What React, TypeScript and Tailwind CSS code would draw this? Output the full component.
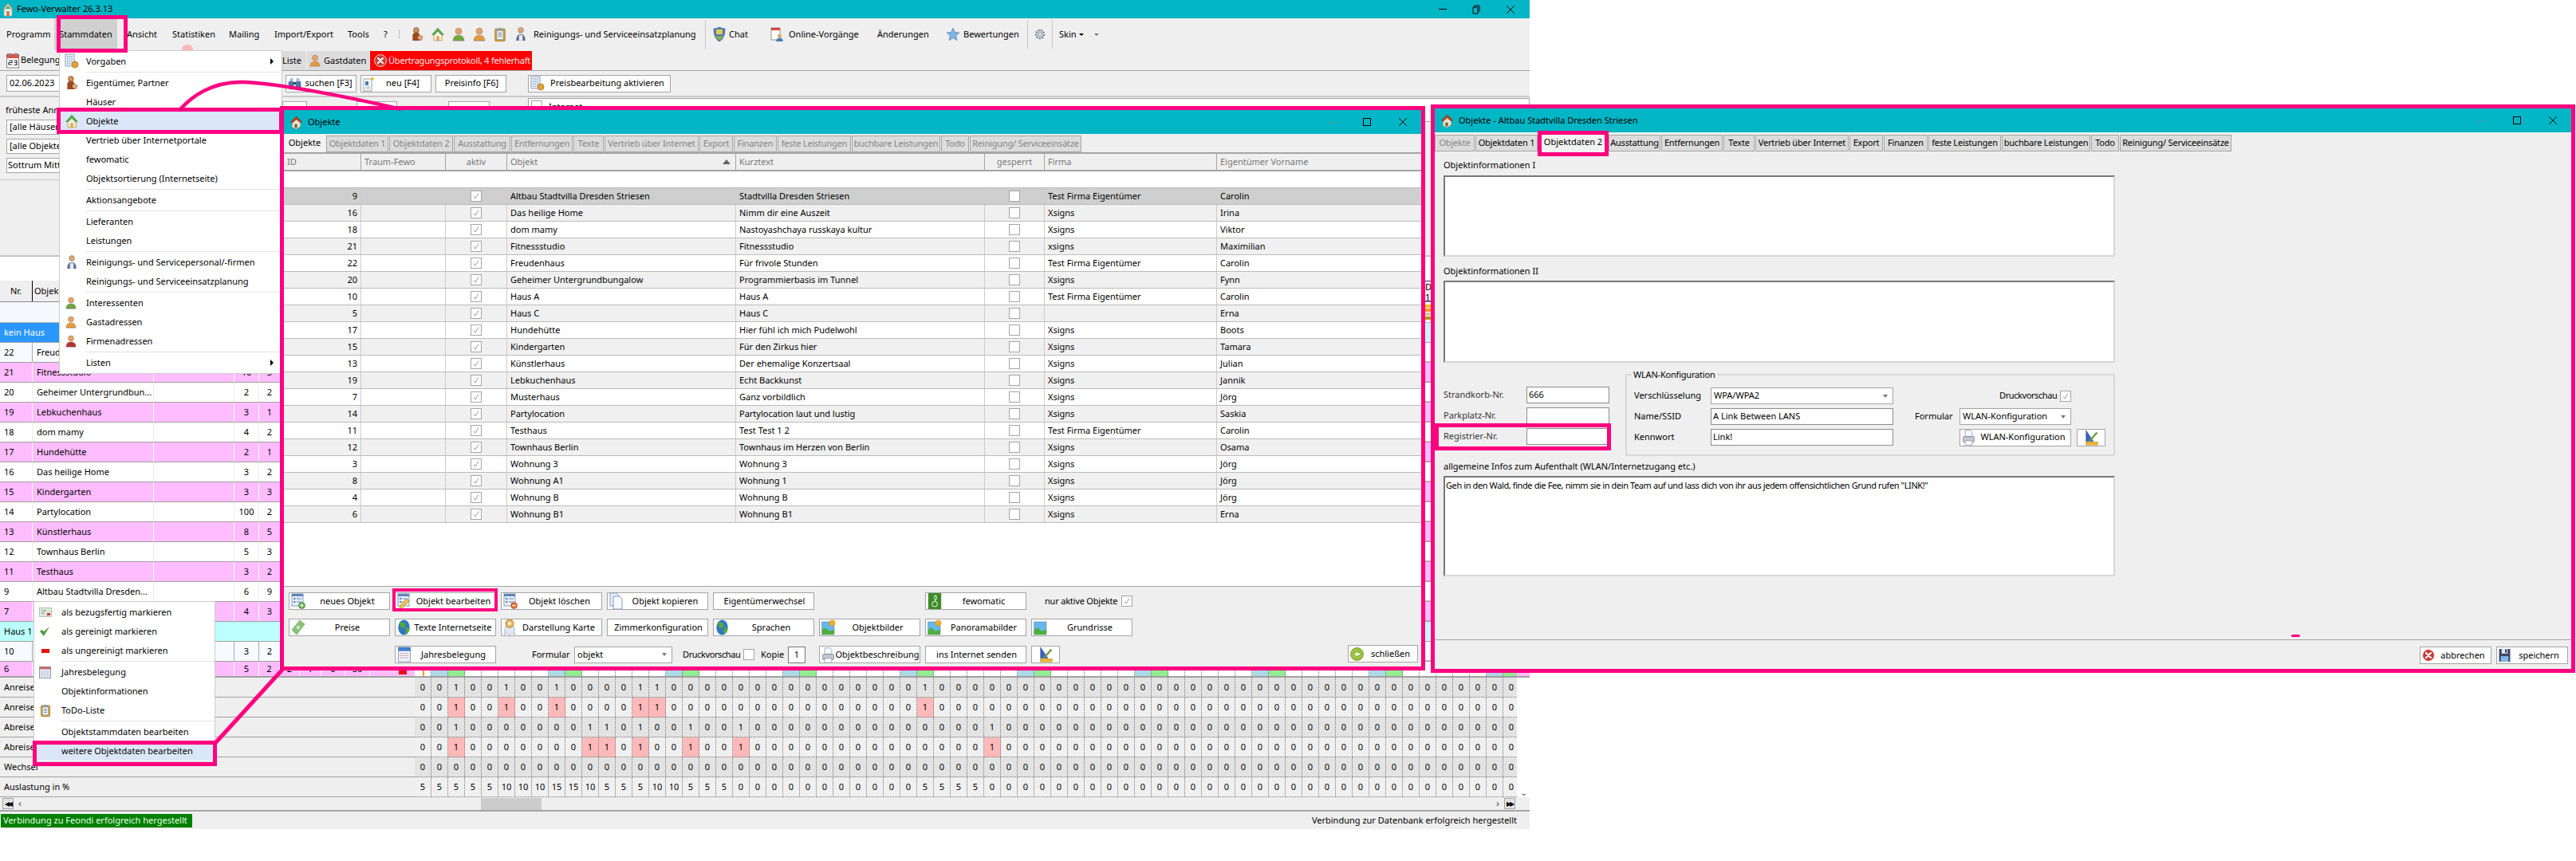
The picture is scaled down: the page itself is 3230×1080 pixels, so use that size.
import type { ReactNode } from "react";

const TEAL = "bg-[#02b6c5]";

/* ---------- icons ---------- */

function Person({ body = "#6fa83c", head = "#e0a56e", size = 16 }: { body?: string; head?: string; size?: number }) {
  return (
    <svg width={size} height={size} viewBox="0 0 16 16" className="shrink-0">
      <ellipse cx="8" cy="15" rx="7" ry="1" fill="#ccc" />
      <circle cx="8" cy="4.5" r="3.5" fill={head} stroke="#a8703c" strokeWidth="0.5" />
      <path d="M2 15c0-4 2-6 6-6s6 2 6 6z" fill={body} stroke="#555" strokeWidth="0.3" />
    </svg>
  );
}

function Owner({ size = 16 }: { size?: number }) {
  return (
    <svg width={size} height={size} viewBox="0 0 16 16" className="shrink-0">
      <circle cx="7" cy="3.5" r="3" fill="#d2925a" stroke="#7a3d18" strokeWidth="0.6" />
      <path d="M3 15V9c0-2 2-3 4-3s4 1 4 3v6z" fill="#9c4a1e" />
      <path d="M9 9l5 1.5-1 4-4.5-1z" fill="#e6b17e" stroke="#7a3d18" strokeWidth="0.5" />
    </svg>
  );
}

function Cleaner({ size = 16 }: { size?: number }) {
  return (
    <svg width={size} height={size} viewBox="0 0 16 16" className="shrink-0">
      <circle cx="8" cy="3.5" r="3" fill="#e0a56e" stroke="#777" strokeWidth="0.5" />
      <path d="M3 15c0-4 1-7 5-7s5 3 5 7z" fill="#5b6f92" />
      <rect x="6" y="9" width="4" height="6" fill="#e8edf5" />
    </svg>
  );
}

function HouseGreen({ size = 16 }: { size?: number }) {
  return (
    <svg width={size} height={size} viewBox="0 0 16 16" className="shrink-0">
      <path d="M3.5 8v7h9V8" fill="#fbf3d8" stroke="#b79a52" strokeWidth="0.8" />
      <path d="M8 1L1.5 8.5h2.6L8 4.5l3.9 4h2.6z" fill="#57b13a" stroke="#2d7a1e" strokeWidth="0.5" />
      <rect x="6.5" y="10" width="3" height="5" fill="#d0a65a" />
    </svg>
  );
}

function HouseRed({ size = 17 }: { size?: number }) {
  return (
    <svg width={size} height={size} viewBox="0 0 16 16" className="shrink-0">
      <path d="M3 8v6l5 2 5-3V7L8 4z" fill="#e9e3d4" stroke="#8a7a60" strokeWidth="0.5" />
      <path d="M8 1L1.5 7.5 3 9l5-4.5 5 4 1.5-1.5z" fill="#b8461f" stroke="#6e2a10" strokeWidth="0.5" />
      <rect x="6" y="10" width="3" height="4.5" fill="#7d5a34" />
    </svg>
  );
}

function HouseTitle() {
  return (
    <svg width="14" height="18" viewBox="0 0 14 18" className="shrink-0">
      <path d="M2 8v9h10V8" fill="#f4f0e4" stroke="#9aa8b8" strokeWidth="1" />
      <path d="M7 1L0.5 8.5h3L7 5l3.5 3.5h3z" fill="#d8c9a0" stroke="#8a7a50" strokeWidth="0.6" />
      <rect x="5" y="11" width="4" height="6" fill="#b98c4e" />
    </svg>
  );
}

function Clipboard({ size = 16 }: { size?: number }) {
  return (
    <svg width={size} height={size} viewBox="0 0 16 16" className="shrink-0">
      <rect x="2.5" y="2" width="11" height="13.5" rx="1" fill="#e3a92f" stroke="#8d6414" strokeWidth="0.7" />
      <rect x="4.5" y="4" width="7" height="9.8" fill="#f5f8ff" stroke="#5a7eb0" strokeWidth="0.5" />
      <rect x="5.5" y="1" width="5" height="2.5" fill="#8aa0bd" />
      <path d="M6 6.5h4M6 8.5h4M6 10.5h4" stroke="#4d6d9b" strokeWidth="0.8" />
    </svg>
  );
}

function Chat() {
  return (
    <svg width="16" height="20" viewBox="0 0 16 20" className="shrink-0">
      <path d="M1 3c3 0 5-1 7-2 2 1 4 2 7 2 0 8-2 13-7 16C3 16 1 11 1 3z" fill="#4d7fb8" stroke="#2b5787" strokeWidth="0.6" />
      <rect x="4" y="4" width="8" height="6" fill="#e7c84d" />
      <path d="M3 12c3 1 7 1 10 0-1 3-3 4-5 5-2-1-4-2-5-5z" fill="#8cb34a" />
    </svg>
  );
}

function OnlineDoc() {
  return (
    <svg width="17" height="19" viewBox="0 0 17 19" className="shrink-0">
      <rect x="1" y="1" width="11" height="15" fill="#fff" stroke="#7a7a7a" strokeWidth="0.8" />
      <rect x="1" y="1" width="11" height="3" fill="#d9453a" />
      <circle cx="11.5" cy="11" r="2.5" fill="#e0a56e" />
      <path d="M7 18c0-3 2-4.5 4.5-4.5S16 15 16 18z" fill="#4d7fb8" />
    </svg>
  );
}

function Star() {
  return (
    <svg width="18" height="18" viewBox="0 0 16 16" className="shrink-0">
      <path d="M8 1l2 4.7 5 .5-3.7 3.4 1 5.2L8 12l-4.3 2.8 1-5.2L1 6.2l5-.5z" fill="#7fb4e6" stroke="#4477aa" strokeWidth="0.6" />
    </svg>
  );
}

function Gear() {
  return (
    <svg width="16" height="18" viewBox="0 0 16 16" className="shrink-0">
      <circle cx="8" cy="8" r="5" fill="none" stroke="#6f7f92" strokeWidth="2.6" strokeDasharray="2 1.4" />
      <circle cx="8" cy="8" r="2.4" fill="#e8edf3" stroke="#6f7f92" strokeWidth="1" />
    </svg>
  );
}

function Calendar23() {
  return (
    <svg width="16" height="20" viewBox="0 0 16 20" className="shrink-0">
      <rect x="0.5" y="2" width="15" height="17" fill="#fff" stroke="#666" strokeWidth="0.8" />
      <rect x="0.5" y="2" width="15" height="5" fill="#d9534a" />
      <rect x="3" y="0.5" width="2" height="4" fill="#888" />
      <rect x="11" y="0.5" width="2" height="4" fill="#888" />
      <path d="M3 10h4v2.5H3v2.5h4M9.5 10h3.5v2.5h-3M13 12.5v3H9.5" fill="none" stroke="#333" strokeWidth="1.2" />
    </svg>
  );
}

function ErrorBadge({ size = 16, ring = "#ffffff" }: { size?: number; ring?: string }) {
  return (
    <svg width={size} height={size} viewBox="0 0 16 16" className="shrink-0">
      <circle cx="8" cy="8" r="7.4" fill="#c63b32" stroke={ring} strokeWidth="0.8" />
      <path d="M5 5l6 6M11 5l-6 6" stroke="#f3f3f3" strokeWidth="2.4" strokeLinecap="round" />
    </svg>
  );
}

function Binoculars() {
  return (
    <svg width="17" height="18" viewBox="0 0 16 16" className="shrink-0">
      <rect x="1" y="5" width="5.5" height="9.5" rx="2" fill="#4d78a8" stroke="#2a4c74" strokeWidth="0.6" />
      <rect x="9.5" y="5" width="5.5" height="9.5" rx="2" fill="#4d78a8" stroke="#2a4c74" strokeWidth="0.6" />
      <rect x="2.5" y="1.5" width="3.5" height="4" fill="#9db9d8" />
      <rect x="10" y="1.5" width="3.5" height="4" fill="#9db9d8" />
      <rect x="6.5" y="6" width="3" height="3" fill="#2a4c74" />
    </svg>
  );
}

function NewDoc() {
  return (
    <svg width="15" height="20" viewBox="0 0 15 20" className="shrink-0">
      <rect x="1" y="4" width="10" height="15" fill="#fff" stroke="#6b84a8" strokeWidth="0.8" />
      <rect x="3" y="7" width="4" height="5" fill="#4d78a8" />
      <path d="M3 14h6M3 16h6" stroke="#8aa0bd" strokeWidth="0.8" />
      <path d="M12 1l.8 1.8 1.9.2-1.4 1.3.4 1.9-1.7-1-1.7 1 .4-1.9L9.3 3l1.9-.2z" fill="#f2b024" />
    </svg>
  );
}

function Calc() {
  return (
    <svg width="18" height="20" viewBox="0 0 18 20" className="shrink-0">
      <rect x="1" y="1" width="11" height="15" fill="#eef3fa" stroke="#6b84a8" strokeWidth="0.8" />
      <path d="M3 4h7M3 7h7M3 10h7M3 13h7" stroke="#5a7eb0" strokeWidth="1" strokeDasharray="1.6 1" />
      <circle cx="13" cy="14" r="4" fill="#e2a23a" stroke="#8d6414" strokeWidth="0.6" />
    </svg>
  );
}

function FormIcon({ badge }: { badge?: "plus" | "minus" | "pen" }) {
  return (
    <svg width="18" height="20" viewBox="0 0 18 20" className="shrink-0">
      <rect x="1" y="1" width="14" height="15" fill="#e9f0fb" stroke="#5f84b8" strokeWidth="0.8" />
      <rect x="1" y="1" width="14" height="3" fill="#5f84b8" />
      <rect x="3" y="6" width="2.5" height="2" fill="#5f84b8" />
      <rect x="3" y="10" width="2.5" height="2" fill="#5f84b8" />
      <path d="M7 7h6M7 11h6" stroke="#5f84b8" strokeWidth="1" />
      {badge === "plus" && (
        <>
          <circle cx="13.5" cy="15.5" r="4" fill="#5fae4a" stroke="#2e7a1e" strokeWidth="0.5" />
          <path d="M11.5 15.5h4M13.5 13.5v4" stroke="#fff" strokeWidth="1.3" />
        </>
      )}
      {badge === "minus" && (
        <>
          <circle cx="13.5" cy="15.5" r="4" fill="#e0703a" stroke="#a03d14" strokeWidth="0.5" />
          <path d="M11.5 15.5h4" stroke="#fff" strokeWidth="1.3" />
        </>
      )}
      {badge === "pen" && <path d="M3 19l1-4 8-8 3 3-8 8z" fill="#edc24a" stroke="#a57f1c" strokeWidth="0.6" />}
    </svg>
  );
}

function Copies() {
  return (
    <svg width="17" height="22" viewBox="0 0 17 22" className="shrink-0">
      <path d="M1 1h8l3 3v13H1z" fill="#e9f0fb" stroke="#5f84b8" strokeWidth="0.8" />
      <path d="M5 5h8l3 3v13H5z" fill="#f6f9ff" stroke="#5f84b8" strokeWidth="0.8" />
    </svg>
  );
}

function Fewomatic() {
  return (
    <svg width="18" height="20" viewBox="0 0 18 22" className="shrink-0">
      <rect x="0" y="0" width="18" height="22" fill="#3f8b2c" />
      <circle cx="9" cy="15" r="3.5" fill="none" stroke="#d6ecc8" strokeWidth="1.2" />
      <path d="M8 12c4-3 5-7 2-9-2 1-2 4 0 7" fill="none" stroke="#d6ecc8" strokeWidth="1.2" />
    </svg>
  );
}

function Money() {
  return (
    <svg width="18" height="22" viewBox="0 0 18 22" className="shrink-0">
      <path d="M1 14L11 2l6 5L7 20z" fill="#8ac27c" stroke="#5d9b4f" strokeWidth="0.6" />
      <circle cx="9" cy="11" r="2.4" fill="#c8e6bf" />
    </svg>
  );
}

function Globe({ size = 17 }: { size?: number }) {
  return (
    <svg width={size} height={size + 3} viewBox="0 0 16 21" className="shrink-0">
      <ellipse cx="8" cy="10.5" rx="7.6" ry="10" fill="#2f78c4" />
      <path d="M3 3c3 1 6 1 7 4s-3 5-5 4-3-4-2-8zM11 11c2-1 4 0 4 2s-2 5-4 6-1-6 0-8z" fill="#55a83c" />
    </svg>
  );
}

function Ribbon() {
  return (
    <svg width="16" height="22" viewBox="0 0 18 25" className="shrink-0">
      <path d="M3 11L1 23l5-2 3 3 3-3 5 2-2-12z" fill="#dfe8f3" stroke="#7d90aa" strokeWidth="0.6" />
      <circle cx="9" cy="7" r="6" fill="#e6b35a" stroke="#a57a24" strokeWidth="0.7" />
      <circle cx="9" cy="7" r="2.2" fill="#fff" />
    </svg>
  );
}

function Photo({ sun = true }: { sun?: boolean }) {
  return (
    <svg width="18" height="20" viewBox="0 0 18 20" className="shrink-0">
      <rect x="0.5" y="3" width="15.5" height="16" fill="#66b7ea" stroke="#6d87a8" strokeWidth="0.6" />
      <path d="M1 19v-6c3-3 5-3 7 0s5 1 8-1v7z" fill="#4fae3c" />
      {sun && <circle cx="13.5" cy="4.5" r="3.5" fill="#f2b024" stroke="#d97f12" strokeWidth="0.6" />}
    </svg>
  );
}

function YearCal() {
  return (
    <svg width="18" height="20" viewBox="0 0 18 21" className="shrink-0">
      <rect x="1" y="1" width="16" height="19" fill="#f2f5fb" stroke="#6b84a8" strokeWidth="0.8" />
      <rect x="1" y="1" width="16" height="5" fill="#3f7fd0" />
      <path d="M3 9h12M3 12h12M3 15h12" stroke="#b26a6a" strokeWidth="1" strokeDasharray="1.4 1" />
    </svg>
  );
}

function Printer() {
  return (
    <svg width="17" height="21" viewBox="0 0 18 24" className="shrink-0">
      <path d="M4 11V2h8l2 2v7z" fill="#f7f9fc" stroke="#7d90aa" strokeWidth="0.8" />
      <rect x="1" y="11" width="16" height="8" rx="1.5" fill="#c2c9d2" stroke="#6d7885" strokeWidth="0.8" />
      <rect x="4" y="17" width="10" height="6" fill="#fff" stroke="#7d90aa" strokeWidth="0.8" />
    </svg>
  );
}

function Ruler() {
  return (
    <svg width="18" height="20" viewBox="0 0 18 22" className="shrink-0">
      <path d="M1 1l10 15H1z" fill="#3a66c0" stroke="#1f3f87" strokeWidth="0.6" />
      <path d="M4 16L15 3l2 2L6 17z" fill="#6b9d3a" />
      <rect x="1" y="17" width="16" height="4" fill="#f0b52c" stroke="#a57a14" strokeWidth="0.5" />
    </svg>
  );
}

function BackArrow() {
  return (
    <svg width="17" height="17" viewBox="0 0 16 16" className="shrink-0">
      <circle cx="8" cy="8" r="7.5" fill="#9cc53c" stroke="#5f8a18" strokeWidth="0.7" />
      <path d="M9 4L4.5 8 9 12V9.5h3v-3H9z" fill="#f4f9e4" stroke="#5f8a18" strokeWidth="0.5" />
    </svg>
  );
}

function Floppy() {
  return (
    <svg width="15" height="18" viewBox="0 0 14 16" className="shrink-0">
      <rect x="0.5" y="0.5" width="13" height="15" fill="#3c4a66" />
      <rect x="3.5" y="0.5" width="7" height="5.5" fill="#dfe6ef" />
      <rect x="7.5" y="1" width="2" height="4" fill="#3c4a66" />
      <rect x="2.5" y="9" width="9" height="6.5" fill="#7db7e8" />
    </svg>
  );
}

function WinControls({ restore, dim }: { restore?: boolean; dim?: boolean }) {
  return (
    <div className={`flex items-center ${restore ? "gap-[32px] pr-[18px]" : "gap-[34px] pr-[17px]"}`}>
      <div className={`h-px w-[10px] ${dim ? "bg-[#4f9aa3]" : "bg-black"}`} />
      {restore ? (
        <svg width="10" height="12" viewBox="0 0 10 12">
          <path d="M3 3V1h6v7H7M1 3h6v8H1z" fill="none" stroke="#000" />
        </svg>
      ) : (
        <div className="h-[10px] w-[10px] border border-black" />
      )}
      <svg width="12" height="12" viewBox="0 0 12 12">
        <path d="M1 1l10 10M11 1L1 11" stroke="#000" strokeWidth="0.9" />
      </svg>
    </div>
  );
}

/* ---------- small controls ---------- */

function Btn({ icon, label, w = "w-[127px]", cls = "" }: { icon?: ReactNode; label?: string; w?: string; cls?: string }) {
  return (
    <div className={`flex h-[22px] shrink-0 items-center overflow-hidden border border-[#a5a5a5] bg-white pl-[2px] ${w} ${cls}`}>
      {icon}
      {label && <span className="flex-1 whitespace-nowrap text-center">{label}</span>}
    </div>
  );
}

function Check({ checked }: { checked?: boolean }) {
  return (
    <div className="flex h-[14px] w-[14px] shrink-0 items-center justify-center border border-[#a5a5a5] bg-white">
      {checked && (
        <svg width="10" height="10" viewBox="0 0 10 10">
          <path d="M2 5.5l2 2.5 4-6.5" fill="none" stroke="#8a8a8a" strokeWidth="0.9" />
        </svg>
      )}
    </div>
  );
}

function Select({ value, w }: { value: string; w: string }) {
  return (
    <div className={`flex h-[21px] shrink-0 items-center justify-between border border-[#a5a5a5] bg-white px-[3px] pr-[6px] ${w}`}>
      <span className="whitespace-nowrap">{value}</span>
      <span className="h-0 w-0 border-x-[3px] border-t-[4px] border-x-transparent border-t-[#777]" />
    </div>
  );
}

function Field({ value, w }: { value?: string; w: string }) {
  return (
    <div className={`flex h-[21px] shrink-0 items-center border border-[#8c8c8c] bg-white pl-[2px] ${w}`}>{value}</div>
  );
}

/* ---------- window tabs ---------- */

type Tab = { label: string; w: string; dim?: boolean; active?: boolean };

function TabStrip({ tabs, h }: { tabs: Tab[]; h: string }) {
  return (
    <div className={`flex shrink-0 items-end gap-px bg-[#efefef] ${h}`}>
      {tabs.map((t) =>
        t.active ? (
          <div key={t.label} className={`flex h-full items-center justify-center whitespace-nowrap bg-[#f2f2f2] ${t.w}`}>
            {t.label}
          </div>
        ) : (
          <div
            key={t.label}
            className={`flex h-[21px] items-center justify-center whitespace-nowrap border border-[#a5a5a5] bg-[#dcdcdc] tracking-[-0.2px] ${t.w} ${t.dim ? "text-[#858585]" : ""}`}
          >
            {t.label}
          </div>
        ),
      )}
    </div>
  );
}

const WIN1_TABS: Tab[] = [
  { label: "Objekte", w: "w-[52px]", active: true },
  { label: "Objektdaten 1", w: "w-[78px]", dim: true },
  { label: "Objektdaten 2", w: "w-[80px]", dim: true },
  { label: "Ausstattung", w: "w-[71px]", dim: true },
  { label: "Entfernungen", w: "w-[77px]", dim: true },
  { label: "Texte", w: "w-[38px]", dim: true },
  { label: "Vertrieb über Internet", w: "w-[118px]", dim: true },
  { label: "Export", w: "w-[42px]", dim: true },
  { label: "Finanzen", w: "w-[54px]", dim: true },
  { label: "feste Leistungen", w: "w-[92px]", dim: true },
  { label: "buchbare Leistungen", w: "w-[111px]", dim: true },
  { label: "Todo", w: "w-[35px]", dim: true },
  { label: "Reinigung/ Serviceeinsätze", w: "w-[140px]", dim: true },
];

const WIN2_TABS: Tab[] = [
  { label: "Objekte", w: "w-[50px]", dim: true },
  { label: "Objektdaten 1", w: "w-[78px]" },
  { label: "Objektdaten 2", w: "w-[87px]", active: true },
  { label: "Ausstattung", w: "w-[65px]" },
  { label: "Entfernungen", w: "w-[77px]" },
  { label: "Texte", w: "w-[39px]" },
  { label: "Vertrieb über Internet", w: "w-[117px]" },
  { label: "Export", w: "w-[42px]" },
  { label: "Finanzen", w: "w-[55px]" },
  { label: "feste Leistungen", w: "w-[91px]" },
  { label: "buchbare Leistungen", w: "w-[111px]" },
  { label: "Todo", w: "w-[35px]" },
  { label: "Reinigung/ Serviceeinsätze", w: "w-[140px]" },
];

/* ---------- Objekte list window ---------- */

const OBJECTS = [
  ["9", "Altbau Stadtvilla Dresden Striesen", "Stadtvilla Dresden Striesen", "Test Firma Eigentümer", "Carolin"],
  ["16", "Das heilige Home", "Nimm dir eine Auszeit", "Xsigns", "Irina"],
  ["18", "dom mamy", "Nastoyashchaya russkaya kultur", "Xsigns", "Viktor"],
  ["21", "Fitnessstudio", "Fitnessstudio", "xsigns", "Maximilian"],
  ["22", "Freudenhaus", "Für frivole Stunden", "Test Firma Eigentümer", "Carolin"],
  ["20", "Geheimer Untergrundbungalow", "Programmierbasis im Tunnel", "Xsigns", "Fynn"],
  ["10", "Haus A", "Haus A", "Test Firma Eigentümer", "Carolin"],
  ["5", "Haus C", "Haus C", "", "Erna"],
  ["17", "Hundehütte", "Hier fühl ich mich Pudelwohl", "Xsigns", "Boots"],
  ["15", "Kindergarten", "Für den Zirkus hier", "Xsigns", "Tamara"],
  ["13", "Künstlerhaus", "Der ehemalige Konzertsaal", "Xsigns", "Julian"],
  ["19", "Lebkuchenhaus", "Echt Backkunst", "Xsigns", "Jannik"],
  ["7", "Musterhaus", "Ganz vorbildlich", "Xsigns", "Jörg"],
  ["14", "Partylocation", "Partylocation laut und lustig", "Xsigns", "Saskia"],
  ["11", "Testhaus", "Test Test 1 2", "Test Firma Eigentümer", "Carolin"],
  ["12", "Townhaus Berlin", "Townhaus im Herzen von Berlin", "Xsigns", "Osama"],
  ["3", "Wohnung 3", "Wohnung 3", "Xsigns", "Jörg"],
  ["8", "Wohnung A1", "Wohnung 1", "Xsigns", "Jörg"],
  ["4", "Wohnung B", "Wohnung B", "Xsigns", "Jörg"],
  ["6", "Wohnung B1", "Wohnung B1", "Xsigns", "Erna"],
];

const OBJ_COLS = "grid grid-cols-[97px_106px_77px_287px_312px_75px_216px_1fr]";

function ObjectsWindow() {
  return (
    <section className="absolute left-[351px] top-[133px] z-20 flex h-[708px] w-[1436px] flex-col border-[5px] border-[#ff0080] bg-white">
      <div className={`flex h-[30px] shrink-0 items-center justify-between ${TEAL}`}>
        <div className="flex items-center gap-[6px] pl-[7px]">
          <HouseRed />
          Objekte
        </div>
        <WinControls dim />
      </div>
      <TabStrip tabs={WIN1_TABS} h="h-[23px]" />
      <div className={`${OBJ_COLS} h-[24px] shrink-0 border-y-2 border-[#a5a5a5] bg-[#efefef] text-[#777]`}>
        <div className="flex items-center border-r border-[#a5a5a5] pl-[4px]">ID</div>
        <div className="flex items-center border-r border-[#a5a5a5] pl-[4px]">Traum-Fewo</div>
        <div className="flex items-center justify-center border-r border-[#a5a5a5]">aktiv</div>
        <div className="flex items-center justify-between border-r border-[#a5a5a5] pl-[4px] pr-[6px]">
          Objekt
          <span className="h-0 w-0 border-x-[5px] border-b-[6px] border-x-transparent border-b-[#666]" />
        </div>
        <div className="flex items-center border-r border-[#a5a5a5] pl-[4px]">Kurztext</div>
        <div className="flex items-center justify-center border-r border-[#a5a5a5]">gesperrt</div>
        <div className="flex items-center border-r border-[#a5a5a5] pl-[4px]">Firma</div>
        <div className="flex items-center pl-[4px]">Eigentümer Vorname</div>
      </div>
      <div className="h-[21px] shrink-0 border-b border-[#bbb] bg-white" />
      {OBJECTS.map((o, i) => (
        <div
          key={o[0]}
          className={`${OBJ_COLS} h-[21px] shrink-0 border-b border-[#bbb] ${i === 0 ? "bg-[#cfcfcf]" : i % 2 ? "bg-[#f0f0f0]" : "bg-white"}`}
        >
          <div className="flex items-center justify-end border-r border-[#ccc] pr-[4px]">{o[0]}</div>
          <div className="border-r border-[#ccc]" />
          <div className="flex items-center justify-center border-r border-[#ccc]">
            <Check checked />
          </div>
          <div className="flex items-center border-r border-[#ccc] pl-[4px]">{o[1]}</div>
          <div className="flex items-center border-r border-[#ccc] pl-[4px]">{o[2]}</div>
          <div className="flex items-center justify-center border-r border-[#ccc]">
            <Check />
          </div>
          <div className="flex items-center border-r border-[#ccc] pl-[4px]">{o[3]}</div>
          <div className="flex items-center pl-[4px]">{o[4]}</div>
        </div>
      ))}
      <div className="flex-1 bg-white" />
      <div className="flex h-[101px] shrink-0 flex-col gap-[11px] border-t border-[#a5a5a5] bg-[#efefef] pl-[6px] pt-[7px]">
        <div className="flex gap-[6px]">
          <Btn icon={<FormIcon badge="plus" />} label="neues Objekt" />
          <Btn icon={<FormIcon badge="pen" />} label="Objekt bearbeiten" />
          <Btn icon={<FormIcon badge="minus" />} label="Objekt löschen" />
          <Btn icon={<Copies />} label="Objekt kopieren" />
          <Btn label="Eigentümerwechsel" />
          <div className="w-[127px]" />
          <Btn icon={<Fewomatic />} label="fewomatic" />
          <div className="ml-[17px] flex items-center gap-[5px] whitespace-nowrap tracking-[-0.2px]">
            nur aktive Objekte
            <Check checked />
          </div>
        </div>
        <div className="flex gap-[6px]">
          <Btn icon={<Money />} label="Preise" />
          <Btn icon={<Globe />} label="Texte Internetseite" />
          <Btn icon={<Ribbon />} label="Darstellung Karte" />
          <Btn label="Zimmerkonfiguration" />
          <Btn icon={<Globe />} label="Sprachen" />
          <Btn icon={<Photo />} label="Objektbilder" />
          <Btn icon={<Photo />} label="Panoramabilder" />
          <Btn icon={<Photo sun={false} />} label="Grundrisse" />
        </div>
        <div className="flex items-center gap-[6px] pl-[133px] pt-px">
          <Btn icon={<YearCal />} label="Jahresbelegung" />
          <div className="ml-[39px] flex w-[393px] shrink-0 items-center">
            <span className="w-[53px]">Formular</span>
            <Select value="objekt" w="w-[123px]" />
            <span className="ml-[13px] w-[76px] whitespace-nowrap tracking-[-0.4px]">Druckvorschau</span>
            <Check />
            <span className="ml-[8px] w-[34px]">Kopie</span>
            <div className="flex h-[21px] w-[22px] items-center justify-center border border-[#777] bg-white">1</div>
          </div>
          <Btn icon={<Printer />} label="Objektbeschreibung" cls="-ml-[39px]" />
          <Btn label="ins Internet senden" />
          <Btn icon={<Ruler />} w="w-[36px]" cls="justify-center pl-0" />
          <Btn icon={<BackArrow />} label="schließen" w="w-[88px]" cls="-mt-[2px] ml-[355px]" />
        </div>
      </div>
    </section>
  );
}

/* ---------- object detail window ---------- */

function FormRow({ label, value }: { label: string; value?: string }) {
  return (
    <div className="flex h-[21px] items-center">
      <span className="w-[104px] text-[#333]">{label}</span>
      <Field value={value} w="w-[104px]" />
    </div>
  );
}

function DetailWindow() {
  return (
    <section className="absolute left-[1794px] top-[131px] z-20 flex h-[713px] w-[1435px] flex-col border-[5px] border-[#ff0080] bg-[#efefef]">
      <div className={`flex h-[30px] shrink-0 items-center justify-between ${TEAL}`}>
        <div className="flex items-center gap-[6px] pl-[7px]">
          <HouseRed />
          Objekte - Altbau Stadtvilla Dresden Striesen
        </div>
        <WinControls dim />
      </div>
      <TabStrip tabs={WIN2_TABS} h="h-[24px]" />
      <div className="flex flex-1 flex-col pl-[11px] pr-[572px]">
        <div className="mt-[10px] h-[14px] leading-[14px]">Objektinformationen I</div>
        <div className="mt-[6px] h-[102px] border-2 border-[#d8d8d8] border-l-[#777] border-t-[#777] bg-white" />
        <div className="mt-[11px] h-[14px] leading-[14px]">Objektinformationen II</div>
        <div className="mt-[5px] h-[103px] border-2 border-[#d8d8d8] border-l-[#777] border-t-[#777] bg-white" />
        <div className="mt-[14px] flex h-[103px]">
          <div className="flex w-[228px] shrink-0 flex-col gap-[5px] pt-[16px]">
            <FormRow label="Strandkorb-Nr." value="666" />
            <FormRow label="Parkplatz-Nr." />
            <FormRow label="Registrier-Nr." />
          </div>
          <div className="relative flex-1 border-2 border-[#d8d8d8] pl-[9px] pt-[15px]">
            <span className="absolute -top-[9px] left-[6px] bg-[#efefef] px-[2px] tracking-[-0.2px]">WLAN-Konfiguration</span>
            <div className="flex flex-col gap-[5px]">
              <div className="flex h-[21px] items-center">
                <span className="w-[96px]">Verschlüsselung</span>
                <Select value="WPA/WPA2" w="w-[229px]" />
                <span className="ml-[133px] w-[76px] whitespace-nowrap tracking-[-0.4px]">Druckvorschau</span>
                <Check checked />
              </div>
              <div className="flex h-[21px] items-center">
                <span className="w-[96px]">Name/SSID</span>
                <Field value="A Link Between LANS" w="w-[229px]" />
                <span className="ml-[27px] w-[56px]">Formular</span>
                <Select value="WLAN-Konfiguration" w="w-[140px]" />
              </div>
              <div className="flex h-[21px] items-center">
                <span className="w-[96px]">Kennwort</span>
                <Field value="Link!" w="w-[229px]" />
                <Btn icon={<Printer />} label="WLAN-Konfiguration" w="w-[140px]" cls="ml-[83px]" />
                <Btn icon={<Ruler />} w="w-[36px]" cls="ml-[7px] justify-center pl-0" />
              </div>
            </div>
          </div>
        </div>
        <div className="mt-[6px] h-[14px] whitespace-nowrap leading-[14px]">allgemeine Infos zum Aufenthalt (WLAN/Internetzugang etc.)</div>
        <div className="mt-[5px] h-[126px] whitespace-nowrap border-2 border-[#d8d8d8] border-l-[#777] border-t-[#777] bg-white pl-[1px] pt-[2px] tracking-[-0.4px]">
          Geh in den Wald, finde die Fee, nimm sie in dein Team auf und lass dich von ihr aus jedem offensichtlichen Grund rufen "LINK!"
        </div>
      </div>
      <div className="flex h-[37px] shrink-0 justify-end gap-[6px] border-t border-[#a5a5a5] pr-[4px] pt-[8px]">
        <Btn icon={<ErrorBadge />} label="abbrechen" w="w-[90px]" />
        <Btn icon={<Floppy />} label="speichern" w="w-[90px]" />
      </div>
    </section>
  );
}

/* ---------- Stammdaten menu ---------- */

type MenuEntry = { label?: string; icon?: ReactNode; arrow?: boolean; hi?: boolean };

function Popup({ entries, indent, cls }: { entries: MenuEntry[]; indent: string; cls: string }) {
  return (
    <div className={`absolute flex flex-col border border-[#ccc] bg-white py-px ${cls}`}>
      {entries.map((e, i) =>
        e.label ? (
          <div key={i} className={`flex h-[24px] items-center ${e.hi ? "bg-[#dbe7f9]" : ""}`}>
            <div className={`flex shrink-0 items-center pl-[6px] ${indent}`}>{e.icon}</div>
            <span className="flex-1 whitespace-nowrap">{e.label}</span>
            {e.arrow && (
              <span className="mr-[10px] h-0 w-0 border-y-[4px] border-l-[4px] border-y-transparent border-l-black" />
            )}
          </div>
        ) : (
          <div key={i} className="flex h-[3px] items-center">
            <div className={`shrink-0 ${indent}`} />
            <div className="h-px flex-1 bg-[#e2e2e2]" />
          </div>
        ),
      )}
    </div>
  );
}

const MAIN_MENU: MenuEntry[] = [
  { label: "Vorgaben", icon: <Calc />, arrow: true },
  {},
  { label: "Eigentümer, Partner", icon: <Owner size={18} /> },
  { label: "Häuser" },
  { label: "Objekte", icon: <HouseGreen size={18} />, hi: true },
  { label: "Vertrieb über Internetportale" },
  { label: "fewomatic" },
  { label: "Objektsortierung (Internetseite)" },
  {},
  { label: "Aktionsangebote" },
  {},
  { label: "Lieferanten" },
  { label: "Leistungen" },
  {},
  { label: "Reinigungs- und Servicepersonal/-firmen", icon: <Cleaner size={18} /> },
  { label: "Reinigungs- und Serviceeinsatzplanung" },
  {},
  { label: "Interessenten", icon: <Person size={16} /> },
  { label: "Gastadressen", icon: <Person body="#e89a3c" size={16} /> },
  { label: "Firmenadressen", icon: <Person body="#b5322d" size={16} /> },
  {},
  { label: "Listen", arrow: true },
];

const CONTEXT_MENU: MenuEntry[] = [
  {
    label: "als bezugsfertig markieren",
    icon: (
      <svg width="16" height="12" viewBox="0 0 16 12">
        <rect x="0.5" y="0.5" width="15" height="11" fill="#dce8d8" stroke="#7fae7a" strokeDasharray="1.5 1" />
        <path d="M3 4h6M3 7h4" stroke="#6f8fb0" />
        <rect x="10" y="7" width="4" height="3" fill="#d93a32" />
      </svg>
    ),
  },
  {
    label: "als gereinigt markieren",
    icon: (
      <svg width="14" height="14" viewBox="0 0 14 14">
        <path d="M1 7l5 6L13 1 6 7 3 5z" fill="#4f9e3a" />
      </svg>
    ),
  },
  { label: "als ungereinigt markieren", icon: <div className="ml-[3px] h-[5px] w-[10px] bg-[#e8100c]" /> },
  {},
  {
    label: "Jahresbelegung",
    icon: (
      <svg width="15" height="15" viewBox="0 0 15 15">
        <rect x="0.5" y="0.5" width="14" height="14" fill="#eef1f8" stroke="#8a9ab5" />
        <rect x="0.5" y="0.5" width="14" height="3" fill="#c96a6a" />
        <path d="M2 6h11M2 8h11M2 10h11M2 12h11" stroke="#8a9ab5" strokeDasharray="1 1" />
      </svg>
    ),
  },
  { label: "Objektinformationen" },
  { label: "ToDo-Liste", icon: <Clipboard /> },
  {},
  { label: "Objektstammdaten bearbeiten" },
  { label: "weitere Objektdaten bearbeiten", hi: true },
];

/* ---------- main window ---------- */

const TOOL_LABELS: [string, string][] = [
  ["Programm", "w-[68px] pl-[8px]"],
  ["Stammdaten", "w-[79px] justify-center bg-[#d0d0d0]"],
  ["Ansicht", "w-[69px] pl-[12px]"],
  ["Statistiken", "w-[71px]"],
  ["Mailing", "w-[57px]"],
  ["Import/Export", "w-[92px]"],
  ["Tools", "w-[45px]"],
  ["?", "w-[19px]"],
];

function Toolbar() {
  return (
    <div className="flex h-[40px] shrink-0 items-stretch bg-[#efefef]">
      {TOOL_LABELS.map(([t, c]) => (
        <div key={t} className={`flex items-center ${c}`}>
          {t}
        </div>
      ))}
      <div className="flex w-[14px] flex-col items-start justify-center gap-[2px]">
        <i className="h-px w-px bg-[#666]" />
        <i className="h-px w-px bg-[#666]" />
        <i className="h-px w-px bg-[#666]" />
        <i className="h-px w-px bg-[#666]" />
      </div>
      <div className="flex items-center gap-[8px]">
        <Owner size={18} />
        <HouseGreen size={18} />
        <Person size={18} />
        <Person body="#e89a3c" size={18} />
        <Clipboard size={18} />
        <Cleaner size={18} />
      </div>
      <div className="ml-[7px] flex w-[208px] items-center whitespace-nowrap">Reinigungs- und Serviceeinsatzplanung</div>
      <div className="mx-[7px] my-[2px] w-px bg-[#c8c8c8]" />
      <div className="flex items-center gap-[4px] pl-[2px]">
        <Chat />
        <span className="w-[48px]">Chat</span>
        <OnlineDoc />
        <span className="ml-[2px] w-[107px] whitespace-nowrap">Online-Vorgänge</span>
        <span className="w-[82px]">Änderungen</span>
        <Star />
        <span className="w-[78px]">Bewertungen</span>
      </div>
      <div className="my-[2px] ml-[2px] w-px bg-[#c8c8c8]" />
      <div className="flex w-[30px] items-center justify-center">
        <Gear />
      </div>
      <div className="my-[2px] w-px bg-[#c8c8c8]" />
      <div className="flex items-center pl-[8px]">
        Skin
        <span className="ml-[3px] h-0 w-0 border-x-[3px] border-t-[3px] border-x-transparent border-t-black" />
        <span className="ml-[13px] h-0 w-0 border-x-[3px] border-t-[3px] border-x-transparent border-t-[#777]" />
      </div>
    </div>
  );
}

function TabRow() {
  return (
    <div className="flex h-[26px] shrink-0 items-end border-b border-[#a5a5a5]">
      <div className="flex h-full w-[75px] items-center gap-[2px] overflow-hidden pl-[8px]">
        <Calendar23 />
        Belegung
      </div>
      <div className="w-[279px]" />
      <div className="flex h-[24px] w-[30px] items-center justify-end overflow-hidden whitespace-nowrap bg-[#dcdcdc] pr-[6px]">Liste</div>
      <div className="ml-px flex h-[24px] w-[78px] items-center gap-[3px] bg-[#dcdcdc] pl-[2px]">
        <Person body="#e89a3c" size={16} />
        Gastdaten
      </div>
      <div className="ml-px flex h-[24px] w-[203px] items-center gap-[2px] whitespace-nowrap bg-[#ff0000] pl-[5px] tracking-[-0.2px] text-[#ffe9e9]">
        <ErrorBadge />
        Übertragungsprotokoll, 4 fehlerhaft
      </div>
    </div>
  );
}

function ActionRow() {
  return (
    <div className="flex h-[33px] shrink-0 items-center gap-[5px] border-b-2 border-[#c8c8c8]">
      <div className="ml-[8px] flex h-[21px] w-[345px] items-center border border-[#a5a5a5] bg-white pl-[3px]">02.06.2023</div>
      <Btn icon={<Binoculars />} label="suchen [F3]" w="w-[89px]" />
      <Btn icon={<NewDoc />} label="neu [F4]" w="w-[89px]" />
      <Btn label="Preisinfo [F6]" w="w-[89px]" />
      <Btn icon={<Calc />} label="Preisbearbeitung aktivieren" w="w-[179px]" cls="ml-[22px]" />
    </div>
  );
}

function FilterRow() {
  return (
    <div className="flex h-[104px] shrink-0">
      <div className="flex w-[351px] shrink-0 flex-col gap-[5px] overflow-hidden border-b border-[#c8c8c8] pl-[8px] pt-[8px]">
        <div className="-ml-[1px] h-[15px] whitespace-nowrap">früheste Anreise</div>
        <div className="flex h-[19px] items-center border border-[#a5a5a5] bg-white pl-[3px]">[alle Häuser]</div>
        <div className="flex h-[19px] items-center border border-[#a5a5a5] bg-white pl-[3px]">[alle Objekte]</div>
        <div className="flex h-[19px] items-center border border-[#a5a5a5] bg-white pl-[1px]">Sottrum Mitte</div>
      </div>
      <div className="flex flex-1 items-start pt-[5px]">
        <div className="ml-[3px] h-[16px] w-[31px] border border-[#a5a5a5] bg-white" />
        <div className="ml-[62px] h-[16px] w-[51px] border border-[#a5a5a5] bg-white" />
        <div className="ml-[64px] h-[16px] w-[52px] border border-[#a5a5a5] bg-white" />
        <div className="-mt-[4px] ml-[48px] flex h-[30px] flex-1 border border-[#a5a5a5] bg-white pl-[3px] pt-[2px]">
          <div className="flex items-start gap-[8px]">
            <Check />
            Internet
          </div>
        </div>
      </div>
    </div>
  );
}

/* ---------- occupancy grid ---------- */

const DAYS = Array.from({ length: 66 }, (_, i) => i);
const ARRIVE = [2, 5, 8, 13, 14, 30];
const LEAVE = [2, 10, 11, 13, 16, 19, 34];
const LOAD = [5, 5, 5, 5, 5, 10, 10, 10, 15, 15, 10, 5, 5, 5, 10, 10, 5, 5, 5];

const loadAt = (d: number) => (d < LOAD.length ? LOAD[d] : d >= 30 && d <= 33 ? 5 : 0);

const HOUSE_ROWS: [string, string, string, string, "pink" | "white" | "soft"][] = [
  ["22", "Freudenhaus", "", "", "soft"],
  ["21", "Fitnessstudio", "10", "3", "pink"],
  ["20", "Geheimer Untergrundbun...", "2", "2", "white"],
  ["19", "Lebkuchenhaus", "3", "1", "pink"],
  ["18", "dom mamy", "4", "2", "white"],
  ["17", "Hundehütte", "2", "1", "pink"],
  ["16", "Das heilige Home", "3", "2", "white"],
  ["15", "Kindergarten", "3", "3", "pink"],
  ["14", "Partylocation", "100", "2", "white"],
  ["13", "Künstlerhaus", "8", "5", "pink"],
  ["12", "Townhaus Berlin", "5", "3", "white"],
  ["11", "Testhaus", "3", "2", "pink"],
  ["9", "Altbau Stadtvilla Dresden...", "6", "9", "white"],
  ["7", "Musterhaus", "4", "3", "pink"],
];

function HouseRow({ nr, name, a, b, tone }: { nr: string; name: string; a: string; b: string; tone: string }) {
  const bg = tone === "pink" ? "bg-[#ffbcff]" : tone === "soft" ? "bg-[#f7faff]" : "bg-white";
  const sep = tone === "pink" ? "border-white" : tone === "soft" ? "border-[#aaa]" : "border-[#eee]";
  return (
    <div className={`flex h-[25px] shrink-0 border-b border-[#a0a0a0] ${bg}`}>
      <div className={`flex w-[41px] items-center border-r pl-[5px] ${sep}`}>{nr}</div>
      <div className={`flex w-[152px] items-center whitespace-nowrap border-r pl-[5px] ${sep}`}>{name}</div>
      <div className={`w-[101px] border-r ${sep}`} />
      <div className={`flex w-[31px] items-center justify-center border-r ${sep}`}>{a}</div>
      <div className={`flex w-[27px] items-center justify-center border-r ${sep}`}>{b}</div>
      <div className="flex-1 border-b border-dotted border-[#888]" />
    </div>
  );
}

function DayRow({ label, values, shade, mark }: { label: string; values: (d: number) => number; shade: boolean; mark?: boolean }) {
  return (
    <div className="flex h-[25px] shrink-0">
      <div className="flex w-[520px] shrink-0 items-center border-b border-[#a0a0a0] bg-[#efefef] pl-[5px]">{label}</div>
      <div className={`flex w-[1382px] overflow-hidden ${shade ? "bg-[#e3e3e3]" : "bg-[#f0f0f0]"}`}>
        {DAYS.map((d) => {
          const v = values(d);
          return (
            <div
              key={d}
              className={`flex w-[21px] shrink-0 items-center justify-center border-b border-r border-dotted border-[#777] ${mark && v ? "bg-[#ffb9b9]" : ""}`}
            >
              {v}
            </div>
          );
        })}
      </div>
    </div>
  );
}

function LastHouseRow() {
  return (
    <div className="flex h-[20px] shrink-0 border-b-2 border-[#a0a0a0] bg-[#ffbcff]">
      <div className="flex w-[41px] items-center border-r border-white pl-[5px]">6</div>
      <div className="flex w-[152px] items-center border-r border-white pl-[5px]">Wohnung B1</div>
      <div className="w-[101px] border-r border-white" />
      <div className="flex w-[31px] items-center justify-center border-r border-white">5</div>
      <div className="flex w-[26px] items-center justify-center border-r border-white">2</div>
      <div className="flex w-[25px] items-center justify-center border-r border-white">2</div>
      <div className="flex w-[27px] items-center justify-center border-r border-white">1</div>
      <div className="flex w-[30px] items-center justify-center border-r border-white">0</div>
      <div className="flex w-[31px] items-center justify-center border-r border-white">30</div>
      <div className="flex w-[56px] items-end justify-end pb-[2px] pr-[10px]">
        <div className="h-[7px] w-[10px] bg-[#e8100c]" />
      </div>
      <div className="flex w-[1382px] overflow-hidden bg-white">
        {DAYS.map((d) => (
          <div
            key={d}
            className={`relative w-[21px] shrink-0 border-r border-dotted border-[#777] ${d % 7 === 1 ? "bg-[#add8e6]" : d % 7 === 2 ? "bg-[#90ee90]" : ""}`}
          >
            {d === 0 && <div className="absolute bottom-0 left-[10px] h-[9px] w-[2px] bg-[#ff9a1f]" />}
          </div>
        ))}
      </div>
    </div>
  );
}

function Grid() {
  return (
    <div className="flex min-h-0 flex-1 flex-col bg-white">
      <div className="h-[31px] shrink-0 border-t border-[#bbb]" />
      <div className="flex h-[27px] shrink-0 border-b border-[#888] bg-[#efefef]">
        <div className="flex w-[41px] items-center justify-center border-r border-black">Nr.</div>
        <div className="flex w-[152px] items-center pl-[2px]">Objekt</div>
        <div className="flex w-[1587px] shrink-0" />
        <div className="flex w-[21px] flex-col border-y border-[#1f3f87] pl-[7px] leading-[13px]">
          <span>Di</span>
          <span>1</span>
        </div>
      </div>
      <div className="flex h-[26px] shrink-0 border-b border-[#bbb] bg-[#f7f9ff]">
        <div className="w-[1780px] shrink-0" />
        <div className="flex w-[21px] flex-col justify-center gap-px">
          <i className="h-[4px] bg-[#ffc400]" />
          <i className="h-[4px] bg-[#ff9a1f]" />
          <i className="h-[4px] bg-[#d2c89a]" />
          <i className="h-[4px] bg-[#a8a000]" />
        </div>
      </div>
      <div className="flex h-[25px] shrink-0 border-b border-[#a0a0a0] bg-[#bbffff]">
        <div className="flex w-[193px] items-center bg-[#2a96ff] pl-[5px] text-white">kein Haus</div>
      </div>
      {HOUSE_ROWS.map((r) => (
        <HouseRow key={r[0]} nr={r[0]} name={r[1]} a={r[2]} b={r[3]} tone={r[4]} />
      ))}
      <div className="flex h-[25px] shrink-0 items-center border-b border-[#a0a0a0] bg-[#bbffff] pl-[5px]">Haus 1</div>
      <HouseRow nr="10" name="Haus A" a="3" b="2" tone="soft" />
      <LastHouseRow />
      <DayRow label="Anreisen" values={(d) => (ARRIVE.includes(d) ? 1 : 0)} shade />
      <DayRow label="Anreisen" values={(d) => (ARRIVE.includes(d) ? 1 : 0)} shade={false} mark />
      <DayRow label="Abreisen" values={(d) => (LEAVE.includes(d) ? 1 : 0)} shade />
      <DayRow label="Abreisen" values={(d) => (LEAVE.includes(d) ? 1 : 0)} shade={false} mark />
      <DayRow label="Wechsel" values={() => 0} shade />
      <DayRow label="Auslastung in %" values={loadAt} shade={false} />
      <div className="flex h-[18px] shrink-0 items-center border-b-2 border-[#a5a5a5] bg-[#efefef] pl-[3px] pr-[18px]">
        <div className="flex h-[14px] w-[14px] items-center justify-center border border-[#a5a5a5] bg-[#e4e4e4] text-[8px] tracking-[-2px]">◀◀</div>
        <span className="ml-[6px] text-[13px] text-[#555]">‹</span>
        <div className="ml-[576px] h-[15px] w-[76px] bg-[#cccccc]" />
        <span className="ml-auto text-[13px] text-[#555]">›</span>
        <div className="ml-[6px] flex h-[14px] w-[14px] items-center justify-center border border-[#a5a5a5] bg-[#e4e4e4] text-[8px] tracking-[-2px]">▶▶</div>
      </div>
      <div className="flex h-[22px] shrink-0 items-center justify-between bg-[#efefef] pl-px pr-[16px]">
        <div className="flex h-[17px] w-[240px] items-center whitespace-nowrap bg-[#007f00] pl-[3px] text-[#e8ffe8]">Verbindung zu Feondi erfolgreich hergestellt</div>
        <span>Verbindung zur Datenbank erfolgreich hergestellt</span>
      </div>
    </div>
  );
}

/* ---------- page ---------- */

export default function App() {
  return (
    <div className="relative h-[1080px] w-[3230px] overflow-hidden bg-white font-['Noto_Sans',sans-serif] text-[11px] text-black">
      <div className="flex h-[1040px] w-[1918px] flex-col overflow-hidden bg-[#efefef]">
        <div className={`flex h-[23px] shrink-0 items-center justify-between ${TEAL}`}>
          <div className="flex items-center gap-[4px] pl-[3px]">
            <HouseTitle />
            Fewo-Verwalter 26.3.13
          </div>
          <WinControls restore />
        </div>
        <Toolbar />
        <TabRow />
        <ActionRow />
        <FilterRow />
        <div className="h-[95px] shrink-0 border-b border-[#ccc] bg-[#efefef]" />
        <Grid />
      </div>

      <div className="absolute left-[1906px] top-[986px] text-[11px] text-[#555]">⌄</div>
      <div className="absolute left-[228px] top-[56px] h-[12px] w-[14px] rounded-full bg-[#ffb9b9]" />

      <Popup entries={MAIN_MENU} indent="w-[33px]" cls="left-[74px] top-[63px] z-10 w-[280px]" />
      <Popup entries={CONTEXT_MENU} indent="w-[34px]" cls="left-[42px] top-[754px] z-10 w-[228px]" />

      <ObjectsWindow />
      <DetailWindow />

      {/* callout frames and connector lines */}
      <div className="absolute left-[71px] top-[19px] z-30 h-[47px] w-[89px] border-[5px] border-[#ff0080]" />
      <div className="absolute left-[71px] top-[135px] z-30 h-[33px] w-[284px] border-[5px] border-[#ff0080]" />
      <div className="absolute left-[41px] top-[929px] z-30 h-[32px] w-[231px] border-[5px] border-[#ff0080]" />
      <div className="absolute left-[492px] top-[738px] z-30 h-[29px] w-[132px] border-[4px] border-[#ff0080]" />
      <div className="absolute left-[1928px] top-[164px] z-30 h-[32px] w-[89px] border-[5px] border-[#ff0080]" />
      <div className="absolute left-[1799px] top-[531px] z-30 h-[34px] w-[221px] border-[5px] border-[#ff0080]" />
      <div className="absolute left-[2873px] top-[796px] z-30 h-[3px] w-[11px] rounded-full bg-[#ff0080]" />
      <svg className="pointer-events-none absolute left-0 top-0 z-30" width="560" height="960" viewBox="0 0 560 960">
        <path d="M226 137C248 113 275 102 306 103C350 105 430 120 503 137" fill="none" stroke="#ff0080" strokeWidth="4.5" />
        <path d="M270 932L354 840" fill="none" stroke="#ff0080" strokeWidth="5" />
      </svg>
    </div>
  );
}
